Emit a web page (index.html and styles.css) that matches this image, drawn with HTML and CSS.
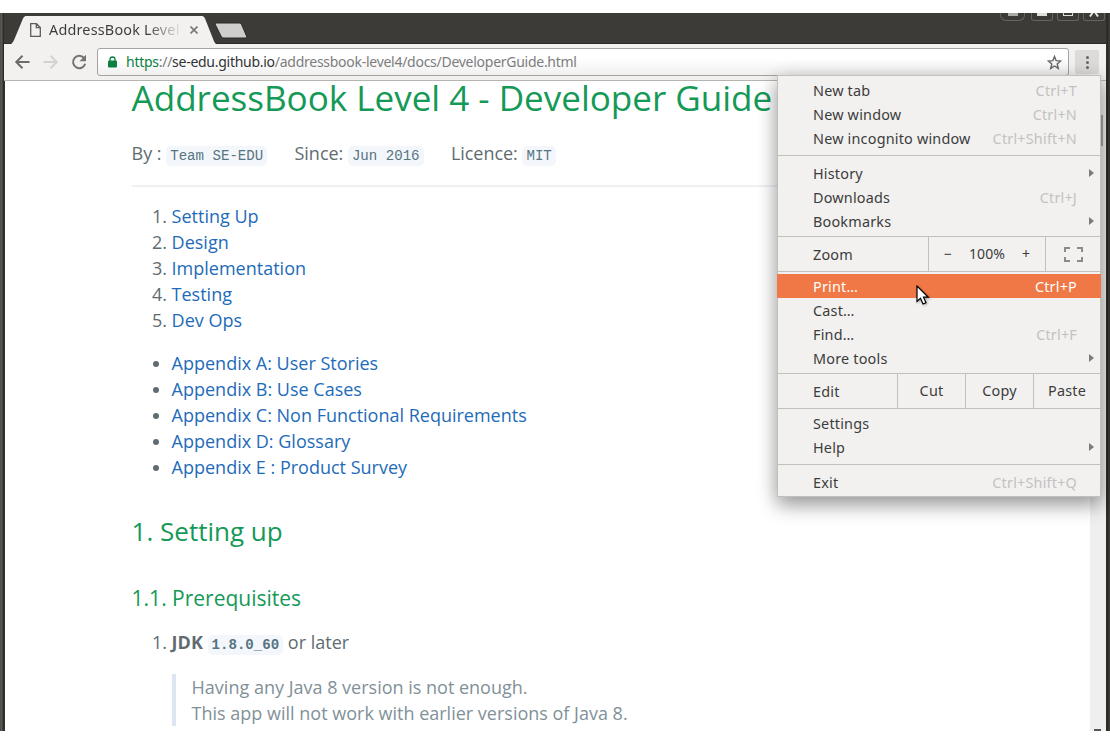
FILE: index.html
```html
<!DOCTYPE html>
<html lang="en">
<head>
<meta charset="utf-8">
<title>AddressBook Level 4 - Developer Guide</title>
<link rel="stylesheet" href="styles.css">
</head>
<body>
<div class="window">
  <header class="tabstrip">
    <svg class="tab-shapes" width="250" height="31" viewBox="0 0 250 31">
      <path d="M7 31C8.500 30.500 9.500 28 10.500 26L19 5.500C20 3.500 21 3 23 3H197C199 3 200 3.500 201 5.500L209.500 27C210.200 29 211 30.500 212.500 31Z" fill="#f2f1f0"/>
      <path d="M212.500 10H235C236.500 10 237.300 10.500 237.800 12L242.500 23C243 24.500 242.500 25 241 25H220C218.500 25 217.500 24.500 217 23L211.500 12C211 10.800 211.500 10 212.500 10Z" fill="#cfcecd" stroke="#2b2a27"/>
    </svg>
    <div class="tab">
      <svg width="11" height="14" viewBox="0 0 11 14" fill="none" stroke="#5c5c5c" stroke-width="1.300"><path d="M.7.700H6.500L10.300 4.500V13.300H.7ZM6.300.700V4.700H10.300"/></svg>
      <span class="tab-title">AddressBook Level</span>
      <svg width="8" height="8" viewBox="0 0 8 8" stroke="#777" stroke-width="1.600"><path d="M.5.500L7.500 7.500M7.500.500L.5 7.500"/></svg>
    </div>
    <div class="controls">
      <span class="control first"><i class="glyph dim"></i></span>
      <span class="control"><i class="glyph"></i></span>
      <span class="control"><i class="glyph box"></i></span>
      <span class="control"><svg width="10" height="4" viewBox="0 0 10 4" stroke="#e4e3df" stroke-width="2"><path d="M4 -1L1 3.500M6 -1L9 3.500"/></svg></span>
    </div>
  </header>
  <nav class="toolbar">
    <svg class="nav-icons" width="84" height="18" viewBox="0 0 84 18" fill="none" stroke-width="2">
      <path d="M15.500 9H2.500M8.500 2.800L2.300 9L8.500 15.200" stroke="#6b6b6b"/>
      <path d="M29.500 9H42.500M36.500 2.800L42.700 9L36.500 15.200" stroke="#d3d2d1"/>
      <path d="M70 5A6.200 6.200 0 1 0 71.200 10.800" stroke="#747474"/><path d="M72 1.800V8.300H65.500Z" fill="#747474"/>
    </svg>
    <div class="address">
      <svg width="9" height="12" viewBox="0 0 9 12"><path d="M2 5V3.500a2.500 2.500 0 0 1 5 0V5" fill="none" stroke="#0b8043" stroke-width="1.300"/><rect y="4.500" width="9" height="7" rx="1" fill="#0b8043"/></svg>
      <span class="url"><span class="scheme">https</span>://<span class="host">se-edu.github.io</span>/addressbook-level4/docs/DeveloperGuide.html</span>
      <svg class="star" width="15" height="15" viewBox="0 0 15 15" fill="none" stroke="#666" stroke-width="1.400"><path d="M7.500 1.500L9.100 5.600L13.700 6L10.200 8.900L11.300 13.400L7.500 11L3.700 13.400L4.800 8.900L1.300 6L5.900 5.600Z"/></svg>
    </div>
    <button class="more"><i></i><i></i><i></i></button>
  </nav>
  <main class="viewport">
    <article class="doc">
      <h1>AddressBook Level 4 - Developer Guide</h1>
      <p class="meta"><span>By : <code>Team SE-EDU</code></span><span>Since: <code>Jun 2016</code></span><span>Licence: <code>MIT</code></span></p>
      <hr>
      <ol>
        <li><a>Setting Up</a></li><li><a>Design</a></li><li><a>Implementation</a></li><li><a>Testing</a></li><li><a>Dev Ops</a></li>
      </ol>
      <ul>
        <li><a>Appendix A: User Stories</a></li><li><a>Appendix B: Use Cases</a></li><li><a>Appendix C: Non Functional Requirements</a></li><li><a>Appendix D: Glossary</a></li><li><a>Appendix E : Product Survey</a></li>
      </ul>
      <h2>1. Setting up</h2>
      <h3>1.1. Prerequisites</h3>
      <ol class="steps"><li><b>JDK <code>1.8.0_60</code></b> or later
        <blockquote>Having any Java 8 version is not enough.<br>This app will not work with earlier versions of Java 8.</blockquote></li></ol>
    </article>
    <div class="scrollbar"><i class="thumb"></i><i class="down"></i></div>
  </main>
</div>
<div class="menu">
  <section class="group first">
    <div class="item"><span>New tab</span><kbd>Ctrl+T</kbd></div>
    <div class="item"><span>New window</span><kbd>Ctrl+N</kbd></div>
    <div class="item"><span>New incognito window</span><kbd>Ctrl+Shift+N</kbd></div>
  </section>
  <section class="group history">
    <div class="item"><span>History</span><i class="arrow"></i></div>
    <div class="item"><span>Downloads</span><kbd>Ctrl+J</kbd></div>
    <div class="item"><span>Bookmarks</span><i class="arrow"></i></div>
  </section>
  <section class="split">
    <span class="label">Zoom</span>
    <div class="cell zoom"><span>−</span><span>100%</span><span>+</span></div>
    <div class="cell full"><svg width="19" height="15" viewBox="0 0 19 15" fill="none" stroke="#8c8b8a" stroke-width="2"><path d="M1 5V1H6M13 1H18V5M18 10V14H13M6 14H1V10"/></svg></div>
  </section>
  <section class="group tools">
    <div class="item active"><span>Print…</span><kbd>Ctrl+P</kbd></div>
    <div class="item"><span>Cast…</span></div>
    <div class="item"><span>Find…</span><kbd>Ctrl+F</kbd></div>
    <div class="item"><span>More tools</span><i class="arrow"></i></div>
  </section>
  <section class="split">
    <span class="label">Edit</span>
    <div class="cell edit">Cut</div><div class="cell edit">Copy</div><div class="cell edit last">Paste</div>
  </section>
  <section class="group settings">
    <div class="item"><span>Settings</span></div>
    <div class="item"><span>Help</span><i class="arrow"></i></div>
  </section>
  <section class="group exit">
    <div class="item"><span>Exit</span><kbd>Ctrl+Shift+Q</kbd></div>
  </section>
</div>
<svg class="cursor" width="14" height="21" viewBox="0 0 14 21"><path d="M1 1V16.500L4.500 13.300L7 19L10 17.700L7.500 12.200H12.300Z" fill="#fff" stroke="#000" stroke-width="1.200"/></svg>
</body>
</html>
```
FILE: styles.css
```css
* { box-sizing: border-box; }
body { margin: 0; width: 1110px; height: 744px; padding-top: 13px; overflow: hidden; background: #fff; font-family: "Open Sans", sans-serif; }
.window { height: 718px; padding: 0 4px 0 4px; overflow: hidden; background: linear-gradient(90deg, #4e4c47 0, #5d5b56 2px, #2c2b27 3px, #2c2b27 4px, #3c3b37 5px, #3c3b37 1106px, #24231f 1107px, #3c3b37 1109px); }
.tabstrip { position: relative; height: 31px; display: flex; justify-content: space-between; background: #3c3b37; border-bottom: 1px solid #2b2a27; }
.tab-shapes { position: absolute; left: 0; top: 0; }
.tab { position: relative; display: flex; align-items: center; width: 196px; height: 31px; padding: 3px 0 0 26px; }
.tab-title { width: 132px; margin: 0 9px 0 8px; overflow: hidden; white-space: nowrap; font: 14.4px/22px "Noto Sans", sans-serif; letter-spacing: .2px; color: transparent; background: linear-gradient(90deg, #3b3b3b 98px, #e4e3e2 131px); background-clip: text; -webkit-background-clip: text; }
.controls { display: flex; gap: 4px; margin-right: 1px; }
.control { display: flex; justify-content: center; width: 22px; height: 8px; border: 1px solid #65645f; border-top: 0; border-radius: 0 0 3px 3px; }
.control.first { width: 25px; margin-right: 2px; border-radius: 0 0 6px 6px; }
.glyph { width: 10px; height: 3px; background: #deddd9; }
.glyph.dim { background: #aaa9a4; }
.glyph.box { background: none; border: solid #deddd9; border-width: 0 1px 1px; }
.toolbar { display: flex; align-items: center; height: 37px; background: #f2f1f0; border-bottom: 1px solid #b6b4b1; }
.nav-icons { margin: 0 -1px 0 10px; }
.address { display: flex; align-items: center; width: 972px; height: 28px; padding: 0 6px 0 10px; border: 1px solid #a5a3a0; border-radius: 3px; background: linear-gradient(#fff 35%, #f0f0f0); }
.url { flex: 1; margin-left: 9px; font: 14px/24px "Noto Sans", sans-serif; color: #7d7d7d; white-space: nowrap; letter-spacing: -.27px; }
.scheme { color: #0b8043; }
.host { color: #333; }
.more { display: flex; flex-direction: column; align-items: center; justify-content: center; gap: 2px; width: 24px; height: 24px; margin-left: 6px; padding: 0; border: 0; border-radius: 2px; background: #dcdbda; }
.more i { width: 3px; height: 3px; border-radius: 50%; background: #666; }
.viewport { display: flex; justify-content: space-between; height: 650px; margin-left: 1px; background: #fff; overflow: hidden; }
.doc { width: 958px; padding-left: 126.6px; font-size: 18px; line-height: 26px; color: #606c71; }
h1, h2, h3 { margin: 0; font-weight: 400; color: #159957; white-space: nowrap; }
h1 { height: 47px; font-size: 35.1px; line-height: 33px; letter-spacing: -.03px; }
.meta { display: flex; gap: 27.3px; height: 26px; margin: 12px 0 19px; letter-spacing: -.03px; }
code { padding: 2px 4px; border-radius: 5px; background: #f3f6fa; color: #567482; font-family: "Liberation Mono", monospace; font-size: 14.1px; line-height: 1.2; letter-spacing: 0; }
hr { height: 2px; margin: 0 0 16px; border: 0; background: #eff0f1; }
ol, ul { margin: 0 0 17px; padding-left: 40px; }
a { color: #1e6bb8; }
h2 { margin-top: 33px; font-size: 26px; line-height: 36px; }
h3 { margin: 35px 0 17px; font-size: 21px; line-height: 28px; }
blockquote { margin: 19px 0 0; padding-left: 16px; border-left: 4px solid #dce6f0; color: #819198; }
.scrollbar { position: relative; width: 16px; background: #efefef; }
.thumb { position: absolute; left: 3px; top: 34px; width: 10px; height: 31px; background: #a8a8a8; }
.down { position: absolute; left: 4px; bottom: 0; width: 7px; height: 2px; background: #555; }
.menu { position: absolute; left: 777px; top: 75px; width: 324px; height: 422px; border: 1px solid #c3c0bb; background: #f2f1f0; color: #3c3c3c; font: 14.4px/24px "Noto Sans", sans-serif; letter-spacing: .2px; box-shadow: 0 9px 18px rgba(0,0,0,.32), 0 2px 18px rgba(0,0,0,.14); }
.group { border-bottom: 1px solid #c3c0bb; }
.first.group { padding: 3px 0 4px; }
.history { padding: 6px 0 2px; }
.tools { padding: 2px 0 3px; }
.tools .item { padding-top: 2px; }
.settings { padding: 3px 0 4px; }
.exit { padding-top: 6px; border: 0; }
.item { display: flex; justify-content: space-between; align-items: center; height: 24px; padding: 0 23px 0 35px; }
kbd { font: inherit; color: #c4c1be; }
.item.active { margin: 0 -1px; padding: 2px 24px 0 36px; background: #f07746; color: #fff; }
.active kbd { color: #fff; }
.arrow { position: relative; top: -1px; margin-right: -17px; border: 4px solid transparent; border-left: 5px solid #7c7b7a; border-right: 0; }
.split { display: flex; height: 35px; border-bottom: 1px solid #c3c0bb; line-height: 34px; }
.label { flex: 1; padding: 1px 0 0 35px; }
.cell { display: flex; align-items: center; justify-content: center; border-left: 1px solid #c3c0bb; }
.zoom { width: 117px; gap: 17px; font-size: 14px; letter-spacing: .07px; }
.full { width: 55px; }
.edit { width: 68px; }
.edit.last { width: 67px; }
.cursor { position: absolute; left: 916px; top: 285px; filter: drop-shadow(1px 1px 1px rgba(0,0,0,.3)); }
```
